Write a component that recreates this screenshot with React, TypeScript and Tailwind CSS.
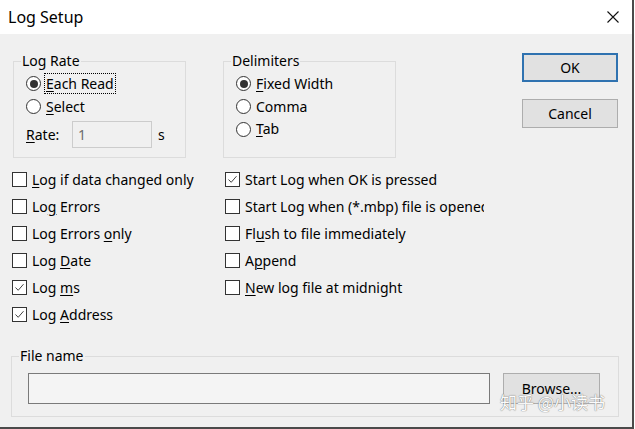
import React from "react";

const font = "font-['Noto_Sans','Liberation_Sans',sans-serif]";

function Radio({ checked }: { checked?: boolean }) {
  return (
    <span className="w-[15px] h-[15px] rounded-full border border-[#333] bg-white flex items-center justify-center shrink-0">
      {checked && <span className="w-[8px] h-[8px] rounded-full bg-[#333]" />}
    </span>
  );
}

function Check({ checked, children }: { checked?: boolean; children: React.ReactNode }) {
  return (
    <div className="h-[27px] flex items-center gap-[5px] whitespace-nowrap">
      <span className="w-[15px] h-[15px] border border-[#333] bg-white flex items-center justify-center shrink-0">
        {checked && (
          <svg width="11" height="11" viewBox="0 0 11 11">
            <polyline points="1.5,5.5 4.2,8.3 9.5,2.2" fill="none" stroke="#444" strokeWidth="1" />
          </svg>
        )}
      </span>
      <span>{children}</span>
    </div>
  );
}

const U = ({ children }: { children: React.ReactNode }) => (
  <span className="underline underline-offset-[2px] decoration-1">{children}</span>
);

export default function App() {
  return (
    <div className={`${font} w-[634px] h-[429px] bg-[#f0f0f0] border-r-2 border-b-2 border-[#4a4a4a] text-[14px] text-black leading-[20px] relative overflow-hidden`}>
      {/* title bar */}
      <div className="h-[34px] bg-white flex items-center justify-between pl-[8px] pr-[13px]">
        <span className="text-[16px]">Log Setup</span>
        <svg width="12" height="12" viewBox="0 0 12 12">
          <path d="M0.5 0.5 L11.5 11.5 M11.5 0.5 L0.5 11.5" stroke="#111" strokeWidth="1.1" />
        </svg>
      </div>

      {/* top groups */}
      <div className="flex mt-[17px] pl-[13px]">
        <fieldset className="w-[173px] border border-[#dcdcdc] pb-[9px]">
          <legend className="ml-[7px] px-[1px]">Log Rate</legend>
          <div className="pl-[12px] pt-[1px]">
            <div className="h-[23px] flex items-center">
              <Radio checked />
              <span className="ml-[4px] px-[1px] outline-1 outline-dotted outline-black leading-[19px]">
                <U>E</U>ach Read
              </span>
            </div>
            <div className="h-[23px] flex items-center">
              <Radio />
              <span className="ml-[5px]">
                <U>S</U>elect
              </span>
            </div>
            <div className="mt-[3px] flex items-center">
              <span className="w-[46px]">
                <U>R</U>ate:
              </span>
              <div className="w-[80px] h-[27px] border border-[#cccccc] bg-[#f0f0f0] flex items-center pl-[5px] text-[#6d6d6d]">1</div>
              <span className="ml-[6px]">s</span>
            </div>
          </div>
        </fieldset>

        <fieldset className="w-[173px] ml-[37px] border border-[#dcdcdc] pb-[6px] self-stretch">
          <legend className="ml-[7px] px-[1px]">Delimiters</legend>
          <div className="pl-[12px] pt-[1px]">
            <div className="h-[23px] flex items-center">
              <Radio checked />
              <span className="ml-[5px]">
                <U>F</U>ixed Width
              </span>
            </div>
            <div className="h-[23px] flex items-center">
              <Radio />
              <span className="ml-[5px]">Comma</span>
            </div>
            <div className="h-[22px] flex items-center">
              <Radio />
              <span className="ml-[5px]">
                <U>T</U>ab
              </span>
            </div>
          </div>
        </fieldset>

        <div className="ml-[126px] flex flex-col gap-[17px] pt-[2px]">
          <button className="w-[96px] h-[29px] bg-[#e1e1e1] border-2 border-[#2f72b0] flex items-center justify-center">OK</button>
          <button className="w-[96px] h-[29px] bg-[#e1e1e1] border border-[#adadad] flex items-center justify-center">Cancel</button>
        </div>
      </div>

      {/* check options */}
      <div className="flex mt-[8px]">
        <div className="pl-[12px] w-[225px]">
          <Check>
            <U>L</U>og if data changed only
          </Check>
          <Check>
            Lo<U>g</U> Errors
          </Check>
          <Check>
            Log Errors <U>o</U>nly
          </Check>
          <Check>
            Log <U>D</U>ate
          </Check>
          <Check checked>
            Log <U>m</U>s
          </Check>
          <Check checked>
            Log <U>A</U>ddress
          </Check>
        </div>
        <div className="w-[259px] overflow-hidden">
          <Check checked>Start Log when OK is pressed</Check>
          <Check>Start Log when (*.mbp) file is opened</Check>
          <Check>
            Fl<U>u</U>sh to file immediately
          </Check>
          <Check>
            A<U>p</U>pend
          </Check>
          <Check>
            <U>N</U>ew log file at midnight
          </Check>
        </div>
      </div>

      {/* file name */}
      <fieldset className="ml-[11px] mt-[18px] w-[608px] border border-[#dcdcdc] pb-[12px] pt-[7px]">
        <legend className="ml-[7px] px-[1px]">File name</legend>
        <div className="flex items-center gap-[13px] pl-[16px]">
          <div className="w-[462px] h-[31px] border border-[#7a7a7a] bg-[#f4f4f4]" />
          <button className="w-[97px] h-[31px] bg-[#e1e1e1] border border-[#adadad] flex items-center justify-center">Browse...</button>
        </div>
      </fieldset>

      {/* watermark */}
      <div className="absolute left-[500px] top-[392px] text-[17px] text-white font-['Noto_Sans_CJK_SC',sans-serif] [text-shadow:0_0_1px_#777,0_0_1px_#777] opacity-90">
        知乎 @小读书
      </div>
    </div>
  );
}
